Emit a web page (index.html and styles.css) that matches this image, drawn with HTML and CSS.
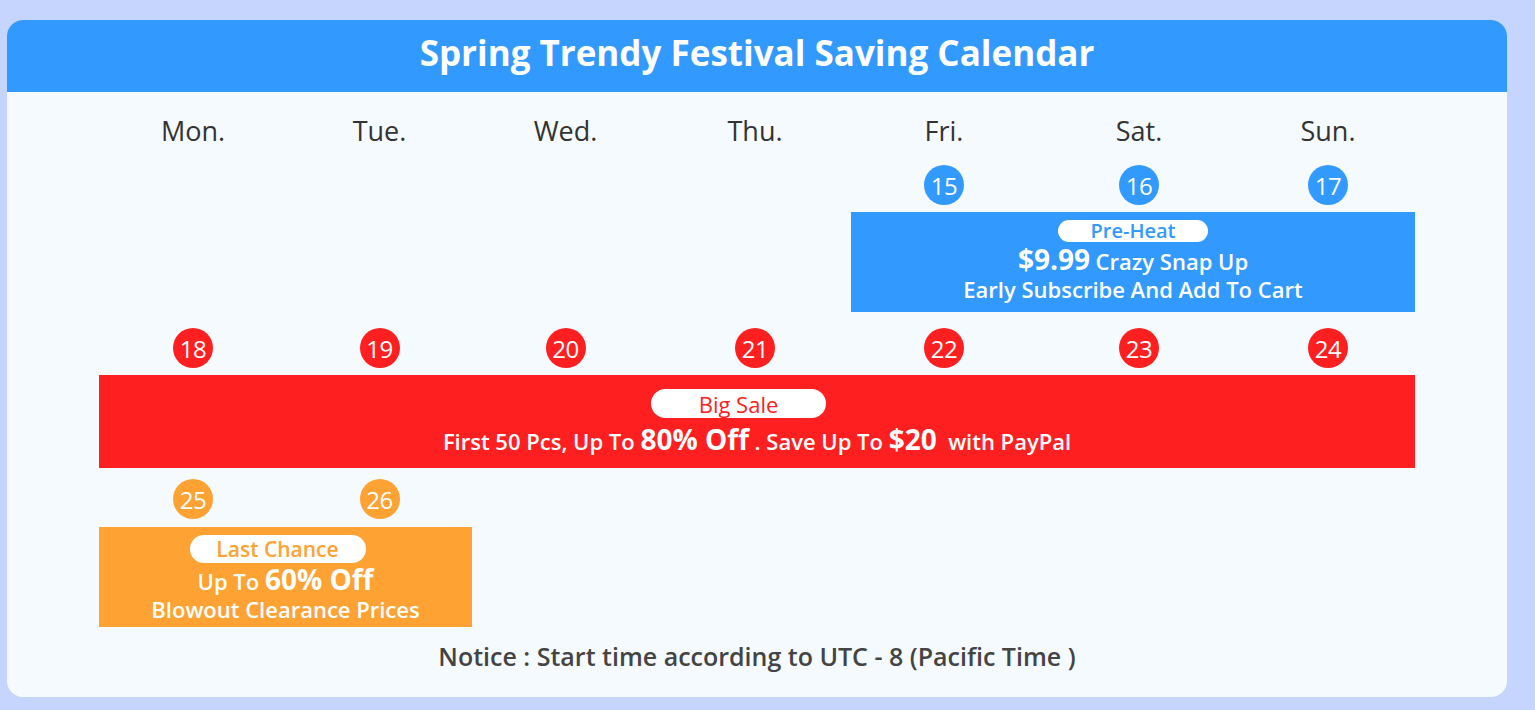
FILE: index.html
```html
<!DOCTYPE html>
<html lang="en">
<head>
<meta charset="utf-8">
<title>Spring Trendy Festival Saving Calendar</title>
<link rel="stylesheet" href="styles.css">
</head>
<body>
<div class="card">
  <div class="card-head">Spring Trendy Festival Saving Calendar</div>
  <div class="card-body">
    <div class="cal">
      <div class="row row-days">
        <div class="day">Mon.</div>
        <div class="day">Tue.</div>
        <div class="day">Wed.</div>
        <div class="day">Thu.</div>
        <div class="day">Fri.</div>
        <div class="day">Sat.</div>
        <div class="day">Sun.</div>
      </div>

      <div class="row row-nums row-nums-1">
        <div class="num-cell c5"><span class="num blue">15</span></div>
        <div class="num-cell c6"><span class="num blue">16</span></div>
        <div class="num-cell c7"><span class="num blue">17</span></div>
      </div>

      <div class="row row-promo row-promo-1">
        <div class="promo promo-blue c5-7">
          <span class="pill pill-blue">Pre-Heat</span>
          <div class="line"><b class="big">$9.99</b> Crazy Snap Up</div>
          <div class="line">Early Subscribe And Add To Cart</div>
        </div>
      </div>

      <div class="row row-nums row-nums-2">
        <div class="num-cell c1"><span class="num red">18</span></div>
        <div class="num-cell c2"><span class="num red">19</span></div>
        <div class="num-cell c3"><span class="num red">20</span></div>
        <div class="num-cell c4"><span class="num red">21</span></div>
        <div class="num-cell c5"><span class="num red">22</span></div>
        <div class="num-cell c6"><span class="num red">23</span></div>
        <div class="num-cell c7"><span class="num red">24</span></div>
      </div>

      <div class="row row-promo row-promo-2">
        <div class="promo promo-red c1-7">
          <span class="pill pill-red">Big Sale</span>
          <div class="line">First 50 Pcs, Up To <b class="big">80% Off</b> . Save Up To <b class="big">$20</b>&nbsp; with PayPal</div>
        </div>
      </div>

      <div class="row row-nums row-nums-3">
        <div class="num-cell c1"><span class="num orange">25</span></div>
        <div class="num-cell c2"><span class="num orange">26</span></div>
      </div>

      <div class="row row-promo row-promo-3">
        <div class="promo promo-orange c1-2">
          <span class="pill pill-orange">Last Chance</span>
          <div class="line">Up To <b class="big">60% Off</b></div>
          <div class="line">Blowout Clearance Prices</div>
        </div>
      </div>
    </div>
    <p class="notice">Notice : Start time according to UTC - 8 (Pacific Time )</p>
  </div>
</div>
</body>
</html>
```

FILE: styles.css
```css
* { box-sizing: border-box; }

html, body {
  margin: 0;
  height: 100%;
}

body {
  background: #c5d5fe;
  padding: 20px 0 0 7px;
  font-family: "Open Sans", "Noto Sans", sans-serif;
}

.card {
  width: 1500px;
  height: 677px;
  background: #f5faff;
  border-radius: 16px;
  overflow: hidden;
}

.card-head {
  height: 72px;
  background: #329afe;
  color: #fff;
  font-weight: 700;
  font-size: 35px;
  display: flex;
  align-items: center;
  justify-content: center;
  padding-bottom: 8px;
}

.card-body {
  padding-top: 18px;
}

.cal {
  width: 1316px;
  margin: 0 auto;
  display: flex;
  flex-direction: column;
}

.row {
  display: grid;
  grid-template-columns: 188px 185px 187px 192px 186px 204px 174px;
}

.row-days { height: 40px; }
.row-nums { height: 40px; }
.row-nums-1 { margin-top: 15px; }
.row-nums-2 { margin-top: 16px; }
.row-nums-3 { margin-top: 11px; }
.row-promo-1 { margin-top: 7px; height: 100px; }
.row-promo-2 { margin-top: 7px; height: 93px; }
.row-promo-3 { margin-top: 8px; height: 100px; }

.day {
  display: flex;
  align-items: center;
  justify-content: center;
  font-size: 27px;
  color: #333;
}

.num-cell {
  display: flex;
  justify-content: center;
  align-items: center;
}

.c1 { grid-column: 1; }
.c2 { grid-column: 2; }
.c3 { grid-column: 3; }
.c4 { grid-column: 4; }
.c5 { grid-column: 5; }
.c6 { grid-column: 6; }
.c7 { grid-column: 7; }
.c5-7 { grid-column: 5 / 8; }
.c1-7 { grid-column: 1 / 8; }
.c1-2 { grid-column: 1 / 3; }

.num {
  width: 40px;
  height: 40px;
  border-radius: 50%;
  color: #fff;
  font-size: 24px;
  display: flex;
  align-items: center;
  justify-content: center;
  letter-spacing: -0.5px;
}
.num.blue { background: #329afe; }
.num.red { background: #fe2020; }
.num.orange { background: #fea233; }

.promo {
  display: flex;
  flex-direction: column;
  align-items: center;
  color: #fff;
  font-weight: 600;
  font-size: 22px;
  line-height: 28px;
}
.promo-blue { background: #329afe; padding-top: 8px; }
.promo-red { background: #fe2020; padding-top: 14px; }
.promo-orange { background: #fea233; padding-top: 8px; }

.line {
  height: 28px;
  white-space: nowrap;
}

.pill {
  background: #fff;
  display: flex;
  align-items: center;
  justify-content: center;
  font-weight: 600;
}
.pill-blue { width: 150px; height: 22px; font-size: 20px; color: #329afe; border-radius: 11px; margin-bottom: 5px; }
.pill-red { width: 175px; height: 29px; font-size: 22px; color: #fe2020; border-radius: 15px; font-weight: 400; margin-bottom: 9px; margin-right: 37px; }
.pill-orange { width: 176px; height: 28px; font-size: 21px; color: #fea233; border-radius: 14px; margin-bottom: 4px; margin-right: 16px; }

.big {
  font-weight: 700;
  font-size: 28px;
  line-height: 20px;
}

.notice {
  margin: 14px 0 0;
  text-align: center;
  font-size: 25px;
  line-height: 30px;
  font-weight: 600;
  color: #444;
}
```
